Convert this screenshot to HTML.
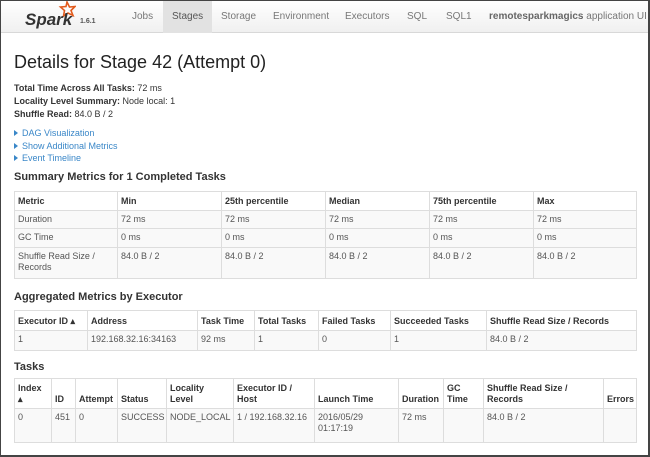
<!DOCTYPE html>
<html><head><style>
*{margin:0;padding:0;box-sizing:border-box}
body{width:650px;height:457px;overflow:hidden;font-family:"Liberation Sans",Arial,sans-serif;color:#333;background:#fff;position:relative}
.frame{position:absolute;left:0;top:0;width:650px;height:457px;border:1px solid #444;border-right:2px solid #444;border-bottom:2px solid #444;pointer-events:none}
.nav{position:absolute;left:0;top:0;width:650px;height:33px;background:linear-gradient(#fff,#f0f0f0);border-bottom:1px solid #d8d8d8}
.nav span{position:absolute;top:11px;font-size:10px;color:#777}
.active{position:absolute;left:163px;top:0;width:49px;height:33px;background:#e2e2e2}
.abs{position:absolute;white-space:nowrap}
h1{position:absolute;left:14px;top:52px;font-size:18px;font-weight:normal;color:#222}
.info{font-size:9px;left:14px}
.link{font-size:9px;color:#3a87c8;left:14px}
.link:before{content:"";display:inline-block;border-left:4px solid #3a87c8;border-top:3px solid transparent;border-bottom:3px solid transparent;margin-right:4px}
h4{position:absolute;left:14px;font-size:11px;font-weight:bold;color:#333}
table{position:absolute;left:14px;width:623px;border-collapse:collapse;font-size:9px;table-layout:fixed}
td,th{border:1px solid #ddd;text-align:left;vertical-align:top;padding:3px 3px;line-height:11px}
th{font-weight:bold;background:#fff;vertical-align:bottom}
td{background:#f9f9f9;color:#555}
</style></head><body>
<div class="nav">
<div class="active"></div>
<svg style="position:absolute;left:24px;top:0px" width="52" height="30" viewBox="0 0 52 30">
<path d="M43 2 L45.5 7 L51 6.5 L47 10.5 L49 15.5 L44 13 L39.5 16 L40.5 10.5 L36.5 7 L42 6.5Z" fill="none" stroke="#e25a1c" stroke-width="1.6"/>
<text x="1" y="25" font-family="Liberation Sans" font-style="italic" font-weight="bold" font-size="17" fill="#333">Spark</text>
</svg>
<span style="left:80px;top:18px;font-size:7px;color:#555;font-weight:bold">1.6.1</span>
<span style="left:132px">Jobs</span>
<span style="left:172px;color:#555">Stages</span>
<span style="left:221px">Storage</span>
<span style="left:273px">Environment</span>
<span style="left:345px">Executors</span>
<span style="left:407px">SQL</span>
<span style="left:446px">SQL1</span>
<span style="left:489px"><b style="color:#666">remotesparkmagics</b> application UI</span>
</div>
<h1>Details for Stage 42 (Attempt 0)</h1>
<div class="abs info" style="top:83px"><b>Total Time Across All Tasks:</b> 72 ms</div>
<div class="abs info" style="top:96px"><b>Locality Level Summary:</b> Node local: 1</div>
<div class="abs info" style="top:109px"><b>Shuffle Read:</b> 84.0 B / 2</div>
<div class="abs link" style="top:128px">DAG Visualization</div>
<div class="abs link" style="top:141px">Show Additional Metrics</div>
<div class="abs link" style="top:153px">Event Timeline</div>
<h4 style="top:171px">Summary Metrics for 1 Completed Tasks</h4>
<table style="top:191px">
<colgroup><col style="width:103px"><col style="width:104px"><col style="width:104px"><col style="width:104px"><col style="width:104px"><col></colgroup>
<tr style="height:19px"><th>Metric</th><th>Min</th><th>25th percentile</th><th>Median</th><th>75th percentile</th><th>Max</th></tr>
<tr style="height:18px"><td>Duration</td><td>72 ms</td><td>72 ms</td><td>72 ms</td><td>72 ms</td><td>72 ms</td></tr>
<tr style="height:19px"><td>GC Time</td><td>0 ms</td><td>0 ms</td><td>0 ms</td><td>0 ms</td><td>0 ms</td></tr>
<tr style="height:31px"><td>Shuffle Read Size / Records</td><td>84.0 B / 2</td><td>84.0 B / 2</td><td>84.0 B / 2</td><td>84.0 B / 2</td><td>84.0 B / 2</td></tr>
</table>
<h4 style="top:291px">Aggregated Metrics by Executor</h4>
<table style="top:310px">
<colgroup><col style="width:73px"><col style="width:110px"><col style="width:57px"><col style="width:64px"><col style="width:72px"><col style="width:96px"><col></colgroup>
<tr style="height:20px"><th>Executor ID ▴</th><th>Address</th><th>Task Time</th><th>Total Tasks</th><th>Failed Tasks</th><th>Succeeded Tasks</th><th>Shuffle Read Size / Records</th></tr>
<tr style="height:20px"><td>1</td><td>192.168.32.16:34163</td><td>92 ms</td><td>1</td><td>0</td><td>1</td><td>84.0 B / 2</td></tr>
</table>
<h4 style="top:361px">Tasks</h4>
<table style="top:378px">
<colgroup><col style="width:37px"><col style="width:24px"><col style="width:42px"><col style="width:49px"><col style="width:67px"><col style="width:81px"><col style="width:84px"><col style="width:45px"><col style="width:40px"><col style="width:120px"><col></colgroup>
<tr style="height:30px"><th>Index<br>▴</th><th>ID</th><th>Attempt</th><th>Status</th><th>Locality<br>Level</th><th>Executor ID /<br>Host</th><th>Launch Time</th><th>Duration</th><th>GC<br>Time</th><th>Shuffle Read Size /<br>Records</th><th>Errors</th></tr>
<tr style="height:34px"><td>0</td><td>451</td><td>0</td><td>SUCCESS</td><td>NODE_LOCAL</td><td>1 / 192.168.32.16</td><td>2016/05/29 01:17:19</td><td>72 ms</td><td></td><td>84.0 B / 2</td><td></td></tr>
</table>
<div class="frame"></div>
</body></html>
